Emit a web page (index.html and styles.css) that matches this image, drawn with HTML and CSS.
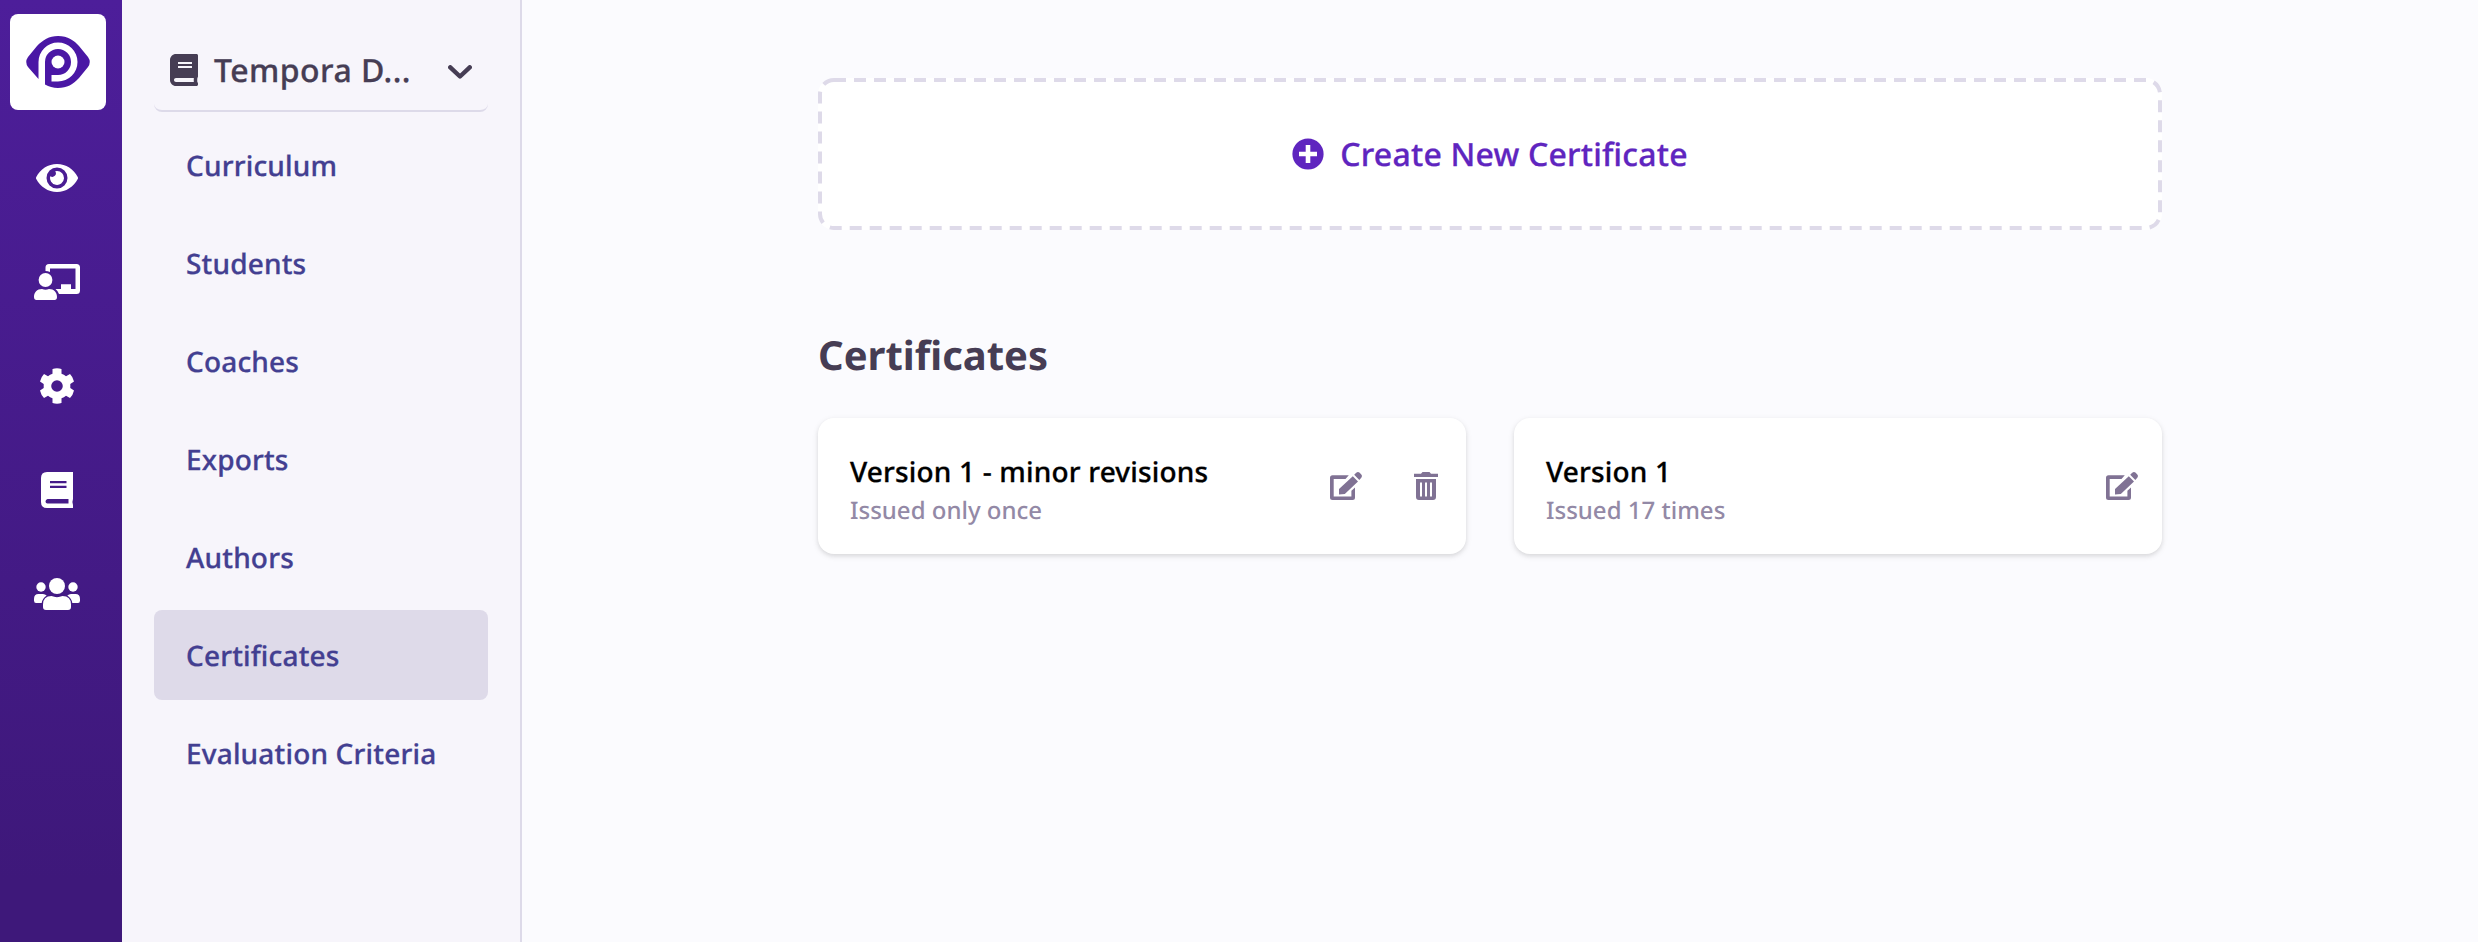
FILE: index.html
```html
<!DOCTYPE html>
<html lang="en">
<head>
<meta charset="utf-8">
<title>Certificates</title>
<link rel="stylesheet" href="styles.css">
</head>
<body>
<svg class="defs" aria-hidden="true">
  <symbol id="edit" viewBox="0 0 32 28">
    <path d="M18.800 3.300 15.500 6.900H3.700V24.400H21.400V18.800L25 15.400V25.500Q25 28 22.500 28H2.500Q0 28 0 25.500V5.800Q0 3.300 2.500 3.300Z" fill="currentColor"/>
    <path d="M22.800 4.200 28 9.400 14.800 22.100 9 22.400V17ZM24.200 2.800 26.200.8Q28-.6 29.700.8L31.300 2.400Q32.600 4 31.300 5.800L29.300 7.900Z" fill="currentColor"/>
  </symbol>
</svg>
<div class="app">
  <nav class="rail">
    <a class="logo"><svg width="64" height="52" viewBox="0 0 64 52">
      <path d="M32 0C42 0 48 4.500 53 10L62 21Q65.500 26 62 31L53 42C47 48.500 41 52 32 52C27 52 23 50.500 19 48.500V26A13 13 0 1 1 32 39H25.500V45.500H32A19.500 19.500 0 1 0 12.500 26V43L2 31Q-1.500 26 2 21L11 10C17 4 23 0 32 0Z" fill="#4a17a5"/>
      <circle cx="32" cy="26" r="6.500" fill="#fff"/>
    </svg></a>
    <a><svg width="42" height="28" viewBox="0 64 576 384"><path fill="currentColor" d="M572.520 241.400C518.290 135.590 410.930 64 288 64S57.680 135.640 3.480 241.410a32.350 32.350 0 0 0 0 29.190C57.710 376.410 165.070 448 288 448s230.320-71.640 284.520-177.410a32.350 32.350 0 0 0 0-29.190zM288 400a144 144 0 1 1 144-144 143.930 143.930 0 0 1-144 144zm0-240a95.310 95.310 0 0 0-25.310 3.790 47.850 47.850 0 0 1-66.900 66.900A95.780 95.780 0 1 0 288 160z"/></svg></a>
    <a><svg width="46" height="36" viewBox="0 0 46 36" fill="currentColor"><circle cx="11.500" cy="16" r="6.900"/><path d="M8 25Q11.500 26.500 15 25C20 25 23 28.500 23 33Q23 36 20.500 36H2.500Q0 36 0 33C0 28.500 3 25 8 25ZM11.500 7V3.500Q11.500 0 15 0H42.500Q46 0 46 3.500V26.500Q46 30 42.500 30H25Q24 27 21.500 25H27V20.300H37V25H41.500V4.500H16V8Q14 7 11.500 7Z"/></svg></a>
    <a><svg width="34" height="36" viewBox="0 0 34 36"><path fill="currentColor" fill-rule="evenodd" d="M12.500 1Q17-.4 21.500 1V5.800Q24 6.700 26 8.300L30 6Q33 9 34 13.500L30.300 16V20L34 22.500Q33 27 30 30L26 27.700Q24 29.300 21.500 30.200V35Q17 36.400 12.500 35V30.200Q10 29.300 8 27.700L4 30Q1 27 0 22.500L3.700 20V16L0 13.500Q1 9 4 6L8 8.300Q10 6.700 12.500 5.800ZM17 12.200A5.800 5.800 0 1 0 17 23.800 5.800 5.800 0 0 0 17 12.200Z"/></svg></a>
    <a><svg width="32" height="36" viewBox="0 0 32 36"><path fill="currentColor" fill-rule="evenodd" d="M6 0H32V27Q30.800 30 32 33V36H6Q0 36 0 30V6Q0 0 6 0ZM9 9V11.300H25.500V9ZM9 13.700V16H25.500V13.700ZM6.500 27Q4.500 27.500 4.500 29.500T6.500 31.500H27.500V27Z"/></svg></a>
    <a><svg width="46" height="32" viewBox="0 0 46 32" fill="currentColor"><circle cx="7" cy="9" r="4.700"/><circle cx="39" cy="9" r="4.700"/><circle cx="23" cy="8" r="8"/><path d="M4.500 16H9Q11 16 12.700 17.500Q8.500 20 7.700 25H2Q0 25 0 22.500V21Q0 16 4.500 16ZM41.500 16H37Q35 16 33.300 17.500Q37.500 20 38.300 25H44Q46 25 46 22.500V21Q46 16 41.500 16ZM17.500 18Q23 20.300 28.500 18Q37 18 37 26.500V29Q37 32 34 32H12Q9 32 9 29V26.500Q9 18 17.500 18Z"/></svg></a>
  </nav>
  <aside class="menu">
    <div class="course">
      <svg width="28" height="32" viewBox="0 0 448 512"><path fill="currentColor" d="M448 360V24c0-13.300-10.700-24-24-24H96C43 0 0 43 0 96v320c0 53 43 96 96 96h328c13.300 0 24-10.700 24-24v-16c0-7.500-3.500-14.300-8.900-18.700-4.200-15.400-4.200-59.300 0-74.700 5.400-4.300 8.900-11.100 8.900-18.600zM128 134c0-3.300 2.700-6 6-6h212c3.300 0 6 2.700 6 6v20c0 3.300-2.700 6-6 6H134c-3.300 0-6-2.700-6-6v-20zm0 64c0-3.300 2.700-6 6-6h212c3.300 0 6 2.700 6 6v20c0 3.300-2.700 6-6 6H134c-3.300 0-6-2.700-6-6v-20zm253.400 250H96c-17.700 0-32-14.300-32-32 0-17.600 14.400-32 32-32h285.400c-1.900 17.100-1.900 46.900 0 64z"/></svg>
      <span class="course-name">Tempora D...</span>
      <svg class="chevron" width="24" height="14" viewBox="0 0 24 14"><path d="M2.300 2.300 12 11.500 21.700 2.300" fill="none" stroke="currentColor" stroke-width="4.400" stroke-linecap="round" stroke-linejoin="round"/></svg>
    </div>
    <a class="item">Curriculum</a>
    <a class="item">Students</a>
    <a class="item">Coaches</a>
    <a class="item">Exports</a>
    <a class="item">Authors</a>
    <a class="item active">Certificates</a>
    <a class="item">Evaluation Criteria</a>
  </aside>
  <main class="content">
    <button class="create">
      <svg class="dashes" width="1344" height="152"><rect x="2" y="2" width="1340" height="148" rx="14" fill="none" stroke="#dedae9" stroke-width="4" stroke-dasharray="12 8"/></svg>
      <svg width="32" height="32" viewBox="0 0 32 32"><circle cx="16" cy="16" r="15.600" fill="currentColor"/><path d="M16 7V25M7 16H25" stroke="#fff" stroke-width="4.600"/></svg>
      <span class="create-label">Create New Certificate</span>
    </button>
    <h1 class="title">Certificates</h1>
    <div class="cards">
      <article class="card">
        <div class="info"><h2>Version 1 - minor revisions</h2><p>Issued only once</p></div>
        <svg class="edit" width="32" height="28"><use href="#edit"/></svg>
        <svg class="trash" width="24" height="28" viewBox="0 0 24 28"><path fill="currentColor" fill-rule="evenodd" d="M0 1.800H7L8.500 0H15.500L17 1.800H24V5H0ZM2 7H22V25Q22 28 19 28H5Q2 28 2 25ZM6 10.500V24.500H8V10.500ZM11 10.500V24.500H13V10.500ZM16 10.500V24.500H18V10.500Z"/></svg>
      </article>
      <article class="card">
        <div class="info"><h2>Version 1</h2><p>Issued 17 times</p></div>
        <svg class="edit" width="32" height="28"><use href="#edit"/></svg>
      </article>
    </div>
  </main>
</div>
</body>
</html>
```
FILE: styles.css
```css
* { box-sizing: border-box; }
body { margin: 0; font-family: "Noto Sans", "Open Sans", sans-serif; background: #fbfbfe; text-rendering: geometricPrecision; }
h1, h2, p { margin: 0; }
svg { display: block; flex: none; }
.defs { display: none; }
.app { display: flex; height: 942px; overflow: hidden; }
.rail { width: 122px; flex: none; padding: 14px 8px 0 0; display: flex; flex-direction: column; align-items: center; color: #fff; background: linear-gradient(#4d1e9a, #3e187a 880px); }
.rail a { width: 96px; height: 104px; display: flex; align-items: center; justify-content: center; }
.rail .logo { height: 96px; margin: 0 0 16px 2px; background: #fff; border-radius: 8px; }
.menu { width: 400px; flex: none; padding: 30px 32px 0; background: #f7f5fb; border-right: 2px solid #dddae9; }
.course { height: 82px; margin-bottom: 8px; padding: 0 16px; display: flex; align-items: center; color: #463d54; font-size: 32px; font-weight: 500; border-bottom: 2px solid #dddae9; border-radius: 8px; }
.course-name, .item, .create-label, .info h2 { font-feature-settings: "liga" 1; -webkit-text-stroke: .3px currentColor; }
.course-name { flex: 1; margin-left: 16px; letter-spacing: .45px; white-space: nowrap; }
.chevron { margin-top: 3px; }
.item { height: 90px; margin-bottom: 8px; padding: 1px 32px 0; display: flex; align-items: center; border-radius: 8px; color: #433f91; font-size: 28px; font-weight: 500; letter-spacing: .17px; white-space: nowrap; }
.active { background: #dedae9; }
.content { flex: 1; padding: 78px 316px 0 296px; }
.create { position: relative; width: 100%; height: 152px; padding: 0; display: flex; align-items: center; justify-content: center; gap: 16px; background: #fff; border: 0; border-radius: 16px; color: #5f25bf; font: 500 32px "Noto Sans", sans-serif; letter-spacing: .2px; text-rendering: inherit; }
.dashes { position: absolute; inset: 0; }
.title { margin: 95px 0 33px; color: #463d54; font-size: 40px; line-height: 60px; font-weight: 700; }
.cards { display: grid; grid-template-columns: 1fr 1fr; gap: 48px; }
.card { height: 136px; padding: 0 28px 0 32px; display: flex; align-items: center; background: #fff; border-radius: 16px; box-shadow: 0 2px 6px rgba(0,0,0,.1), 0 2px 4px rgba(0,0,0,.06); color: #807294; }
.info { flex: 1; padding-top: 8px; }
.info h2 { color: #000; font-size: 28px; line-height: 42px; font-weight: 500; letter-spacing: .17px; }
.info p { color: #9389a6; font-size: 24px; line-height: 36px; font-weight: 500; }
.edit { margin-right: -4px; }
.trash { margin-left: 56px; }
```
